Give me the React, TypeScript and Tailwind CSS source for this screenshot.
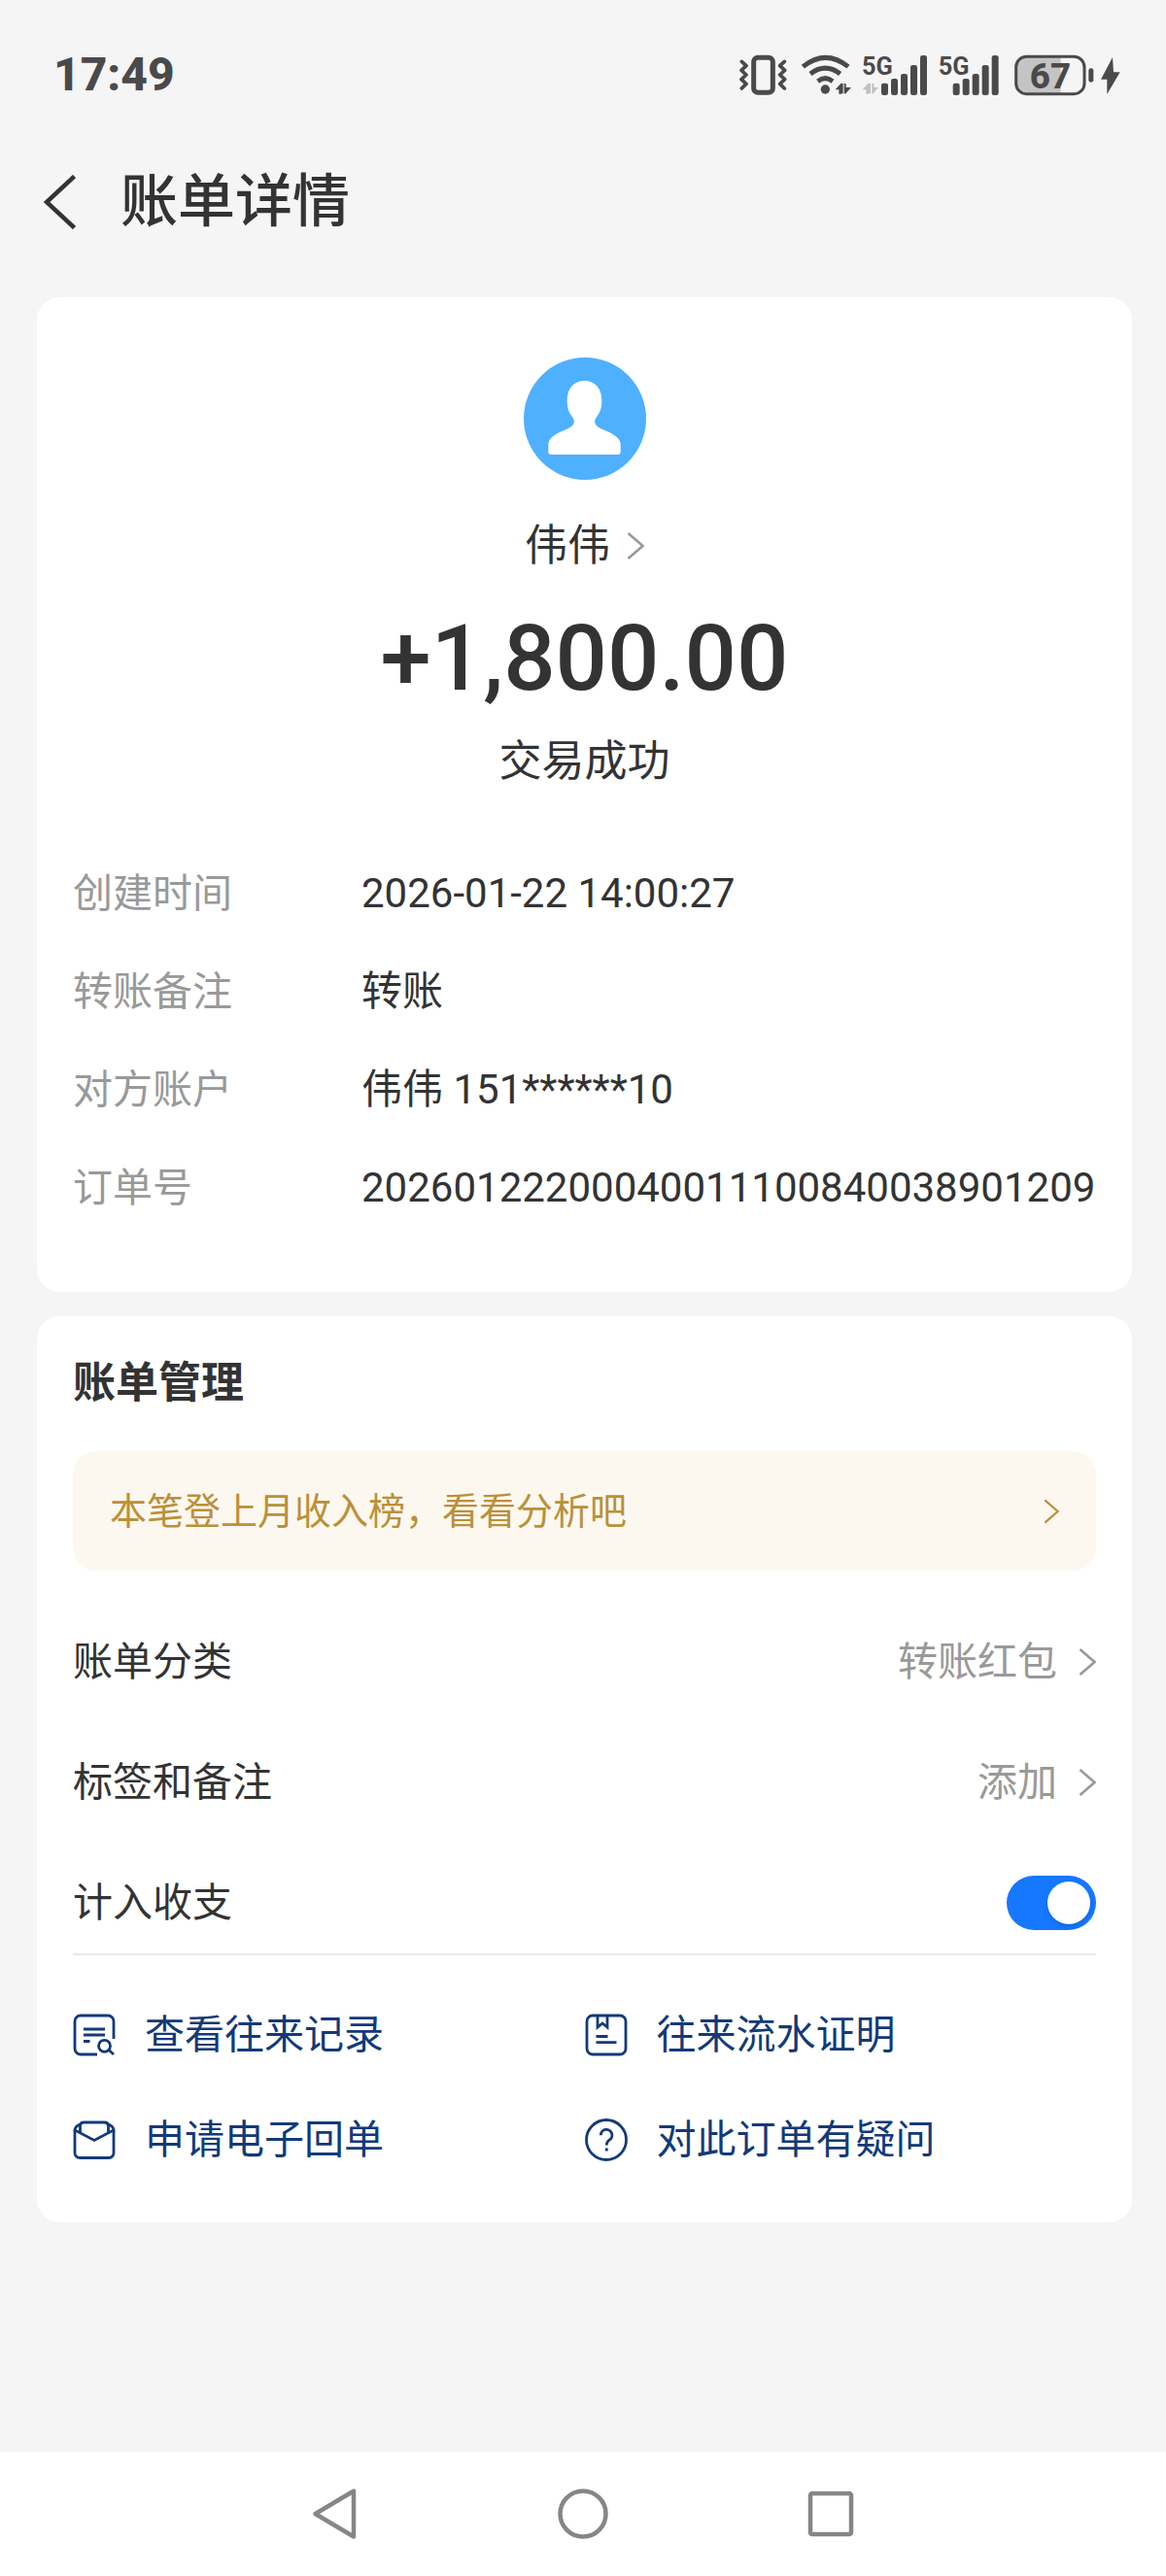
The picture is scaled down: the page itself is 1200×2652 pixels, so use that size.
import { useState } from 'react';
import type { ReactNode } from 'react';

interface DetailItem {
  label: string;
  value: string;
}

const DETAILS: DetailItem[] = [
  { label: '创建时间', value: '2026-01-22 14:00:27' },
  { label: '转账备注', value: '转账' },
  { label: '对方账户', value: '伟伟 151******10' },
  { label: '订单号', value: '20260122200040011100840038901209' },
];

function Chevron({ className }: { className: string }) {
  return (
    <svg viewBox="0 0 18 28" fill="none" stroke="currentColor" strokeWidth="2.6" className={className} aria-hidden="true">
      <path d="M1.5 1 16.5 14 1.5 27" />
    </svg>
  );
}

function VibrateIcon() {
  return (
    <svg viewBox="60 45 153 129" className="h-[43px] w-[51px]" fill="none" stroke="currentColor" aria-hidden="true">
      <rect x="107" y="55" width="59" height="108" rx="13" strokeWidth="15" />
      <path
        d="M70 67l14 13-15 14 15 14-15 14 15 14-14 14M202 67l-14 13 15 14-15 14 15 14-15 14 14 14"
        strokeWidth="11"
        strokeLinecap="round"
        strokeLinejoin="round"
      />
    </svg>
  );
}

function WifiIcon() {
  return (
    <svg viewBox="249 45 159 129" className="h-[43px] w-[53px]" fill="none" stroke="currentColor" aria-hidden="true">
      <path d="M259 83q70-56 140 0M282 105q46-35 92 0M305 128q23-18 46 0" strokeWidth="15" />
      <circle cx="328" cy="153" r="14" fill="currentColor" stroke="none" />
      <path d="M359 154l19-21v34h-8v-13zM390 133v14h18l-18 20z" fill="currentColor" stroke="none" />
      <path d="M380 135v31M389 135v31" strokeWidth="6" />
    </svg>
  );
}

function SignalIcon({ showData = false }: { showData?: boolean }) {
  return (
    <svg
      viewBox={showData ? '444 45 198 129' : '457 45 192 129'}
      className={showData ? 'h-[43px] w-[66px] overflow-visible' : 'h-[43px] w-[64px] overflow-visible'}
      fill="currentColor"
      aria-hidden="true"
    >
      <text x={showData ? 441 : 456} y="108" className="text-[76px] font-bold">
        5G
      </text>
      {showData && <path d="M443 154l19-21v34h-8v-13zM462 135h6v31h-6zM472 135h6v31h-6zM474 133v14h18l-18 20z" opacity="0.3" />}
      <rect x="501" y="134" width="21" height="37" rx="7" />
      <rect x="531" y="120" width="21" height="51" rx="7" />
      <rect x="561" y="105" width="21" height="66" rx="7" />
      <rect x="591" y="78" width="21" height="93" rx="7" />
      <rect x="621" y="48" width="21" height="123" rx="7" />
    </svg>
  );
}

function BatteryIcon() {
  return (
    <svg viewBox="906 45 333 129" className="h-[43px] w-[111px]" fill="currentColor" aria-hidden="true">
      <path d="M950 54h105v111H950a32 32 0 0 1-32-32V86a32 32 0 0 1 32-32z" fill="#c4c4c4" />
      <rect x="917" y="52" width="211" height="115" rx="32" fill="none" stroke="currentColor" strokeWidth="9" />
      <text x="1023" y="149" textAnchor="middle" className="text-[110px] font-extrabold">
        67
      </text>
      <rect x="1141" y="88" width="15" height="43" rx="7" />
      <path d="M1215 54l-36 68h19v46l40-68h-20z" />
    </svg>
  );
}

function RecordsIcon() {
  return (
    <>
      <path d="M42 26V8a6 6 0 0 0-6-6H8a6 6 0 0 0-6 6v28a6 6 0 0 0 6 6h17" />
      <path d="M11 16h22M11 22h22M11 28.5h6.500M37 37.500l5 4.500" />
      <circle cx="32.500" cy="33.300" r="6" />
    </>
  );
}

function StatementIcon() {
  return (
    <>
      <rect x="2" y="2" width="40" height="40" rx="6" />
      <path d="M13 2v12l5-4 5 4V2M11.500 23.500h12M11.500 29.700h21" />
    </>
  );
}

function ReceiptIcon() {
  return (
    <>
      <path d="M2 12v23.500a5 5 0 0 0 5 5h30a5 5 0 0 0 5-5V12" />
      <path d="M7.500 15V8q0-4 4-4h21q4 0 4 4v7" />
      <path d="M8.500 5.500Q2 8 2 12l20 10.500L42 12q0-4-6.500-6.500" />
    </>
  );
}

function HelpIcon() {
  return (
    <>
      <circle cx="22" cy="22" r="20.500" />
      <path d="M16.300 17.200a5.800 5.800 0 1 1 8.700 5q-2.700 1.600-2.700 5.300M22.300 30.500v3" />
    </>
  );
}

function ActionLink({ icon, children }: { icon: ReactNode; children: ReactNode }) {
  return (
    <a href="#" className="flex items-center gap-[30px]">
      <svg viewBox="0 0 44 44" className="size-11 shrink-0" fill="none" stroke="currentColor" strokeWidth="2.8" aria-hidden="true">
        {icon}
      </svg>
      {children}
    </a>
  );
}

function SettingRow({ label, value }: { label: string; value: string }) {
  return (
    <button type="button" className="flex h-[104px] w-full items-center justify-between">
      <span>{label}</span>
      <span className="flex items-center gap-[22px] text-[#999999]">
        {value}
        <Chevron className="h-7 w-[18px]" />
      </span>
    </button>
  );
}

export default function App() {
  const [counted, setCounted] = useState(true);

  return (
    <div
      lang="zh-CN"
      className="flex min-h-screen flex-col bg-[#f5f5f5] text-[41px] leading-[60px] text-[#333333] [font-family:Roboto,'Noto_Sans_CJK_SC',sans-serif]"
    >
      <div className="flex h-[154px] items-center justify-between pr-[47px] pl-[55px] text-[#4a4a4a]">
        <span className="text-[48px] font-extrabold">17:49</span>
        <div className="flex items-center gap-3">
          <VibrateIcon />
          <WifiIcon />
          <SignalIcon showData />
          <SignalIcon />
          <BatteryIcon />
        </div>
      </div>

      <header className="flex h-[108px] items-center gap-[46px] pl-[45px]">
        <button type="button" aria-label="返回">
          <svg viewBox="0 0 33 56" className="h-14 w-[33px]" fill="none" stroke="currentColor" strokeWidth="4.5" aria-hidden="true">
            <path d="M31.500 1.500 3 28l28.500 26.500" />
          </svg>
        </button>
        <h1 className="text-[59px] font-medium">账单详情</h1>
      </header>

      <main className="flex flex-col gap-[25px] pt-11 pr-[35px] pl-[38px]">
        <section className="rounded-3xl bg-white px-[37px] pt-[62px] pb-[77px]">
          <div className="flex flex-col items-center">
            <svg viewBox="0 0 126 126" className="size-[126px]" aria-hidden="true">
              <circle cx="63" cy="63" r="63" fill="#4fb0ff" />
              <path
                fill="#ffffff"
                d="M62.500 24C51.500 24 44.700 32 44.700 44c0 8 1.500 12 4.500 16 2.500 3.500 3.300 5.500 2.300 8-1.200 3-5 5-11 7.500C32 79 25.300 83.500 25.300 89.500V97q0 3 3 3h68.400q3 0 3-3v-7.500c0-6-6.700-10.500-15.200-14-6-2.500-9.800-4.500-11-7.500-1-2.500-.2-4.500 2.300-8 3-4 4.500-8 4.500-16C80.300 32 73.500 24 62.500 24z"
              />
            </svg>
            <a href="#" className="mt-[38px] flex items-center gap-[17px] text-[44px]">
              伟伟
              <Chevron className="h-7 w-[18px] text-[#999999]" />
            </a>
            <p className="mt-8 text-[94px] leading-[108px] font-medium">+1,800.00</p>
            <p className="mt-[22px] text-[44px]">交易成功</p>
          </div>

          <dl className="mt-[76px] flex flex-col gap-[41px]">
            {DETAILS.map((item) => (
              <div key={item.label} className="flex">
                <dt className="w-[297px] shrink-0 text-[#999999]">{item.label}</dt>
                <dd className="text-[42px]">{item.value}</dd>
              </div>
            ))}
          </dl>
        </section>

        <section className="rounded-3xl bg-white px-[37px] pt-[39px] pb-[55px]">
          <h2 className="text-[44px] font-bold">账单管理</h2>
          <a
            href="#"
            className="mt-10 flex h-[123px] items-center justify-between rounded-3xl bg-[#fcf8f0] px-[38px] text-[38px] text-[#bb9038]"
          >
            本笔登上月收入榜，看看分析吧
            <Chevron className="h-[26px] w-4" />
          </a>

          <div className="mt-[42px] flex flex-col gap-5 border-b-2 border-[#e8e8e8]">
            <SettingRow label="账单分类" value="转账红包" />
            <SettingRow label="标签和备注" value="添加" />
            <div className="flex h-[104px] items-center justify-between">
              <label htmlFor="counted">计入收支</label>
              <input
                id="counted"
                type="checkbox"
                role="switch"
                checked={counted}
                onChange={(e) => setCounted(e.target.checked)}
                className="h-14 w-[92px] appearance-none rounded-full bg-[#cccccc] p-1.5 before:block before:size-11 before:rounded-full before:bg-white before:shadow-md checked:bg-[#1677ff] checked:before:translate-x-9"
              />
            </div>
          </div>

          <nav className="mt-[52px] grid grid-cols-2 gap-y-12 text-[#123a78]">
            <ActionLink icon={<RecordsIcon />}>查看往来记录</ActionLink>
            <ActionLink icon={<StatementIcon />}>往来流水证明</ActionLink>
            <ActionLink icon={<ReceiptIcon />}>申请电子回单</ActionLink>
            <ActionLink icon={<HelpIcon />}>对此订单有疑问</ActionLink>
          </nav>
        </section>
      </main>

      <footer className="mt-auto flex h-32 items-center justify-center gap-[199px] bg-white text-[#868686]">
        <button type="button" aria-label="返回上一页">
          <svg viewBox="0 0 56 56" className="size-14" fill="none" stroke="currentColor" strokeWidth="4.5" strokeLinejoin="round" aria-hidden="true">
            <path d="M47 4.500v47L7.500 28z" />
          </svg>
        </button>
        <button type="button" aria-label="主屏幕">
          <svg viewBox="0 0 56 56" className="size-14" fill="none" stroke="currentColor" strokeWidth="4.5" aria-hidden="true">
            <circle cx="28" cy="28" r="23.500" />
          </svg>
        </button>
        <button type="button" aria-label="最近任务">
          <svg viewBox="0 0 56 56" className="size-14" fill="none" stroke="currentColor" strokeWidth="4.5" aria-hidden="true">
            <rect x="7" y="7" width="42" height="42" rx="2" />
          </svg>
        </button>
      </footer>
    </div>
  );
}
